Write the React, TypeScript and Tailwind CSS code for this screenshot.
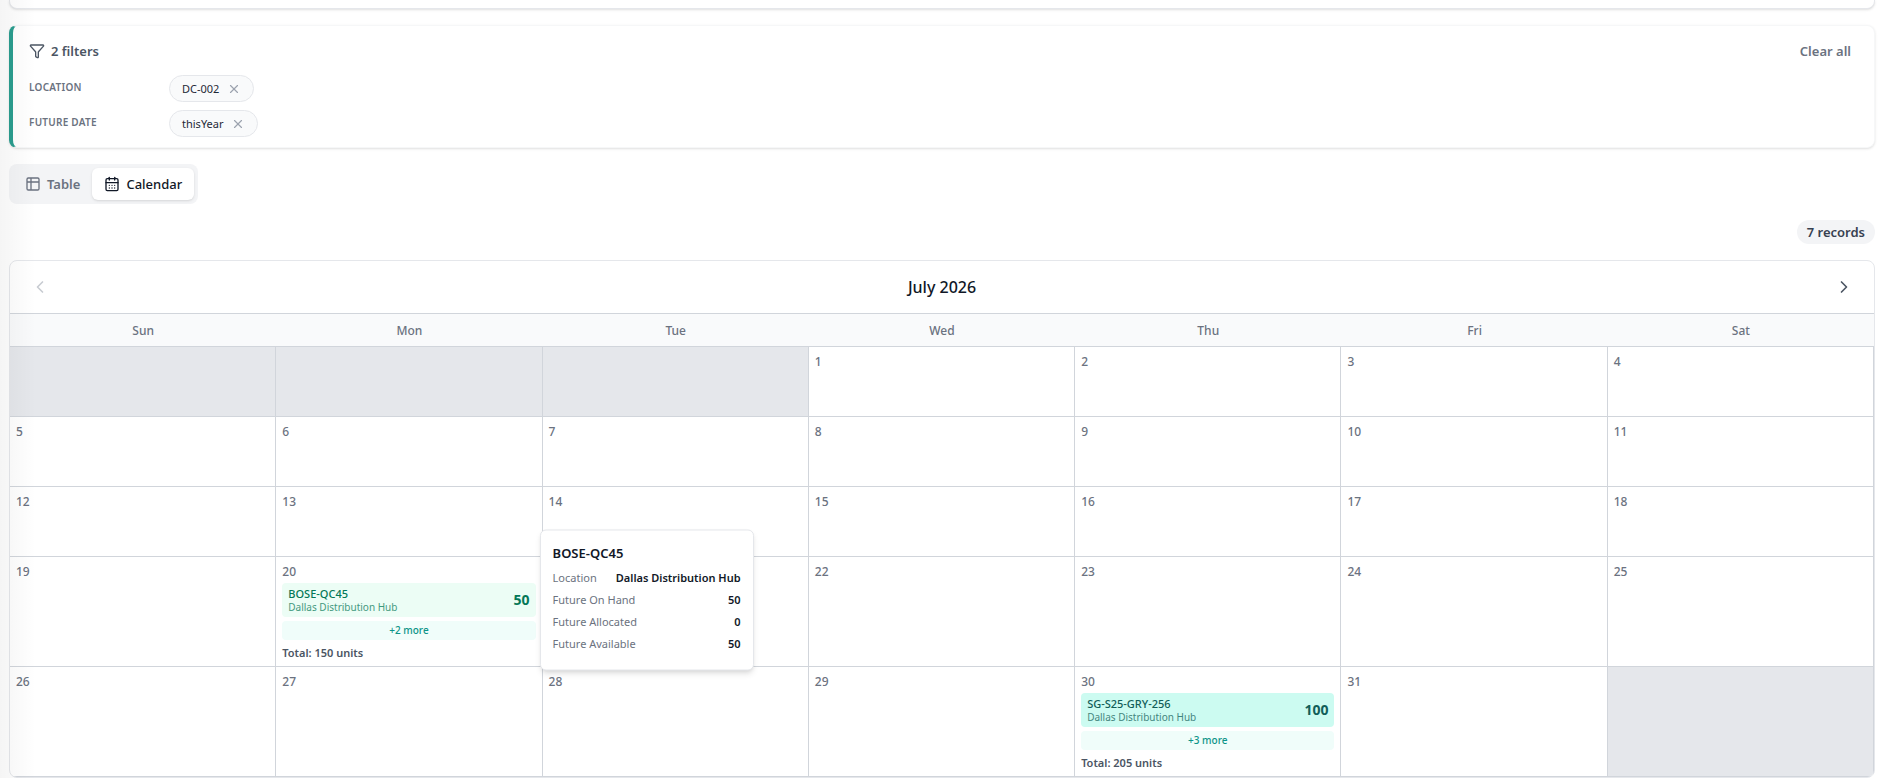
import { CalendarDays, ChevronLeft, ChevronRight, Filter, Table2, X } from 'lucide-react';

interface CalendarEntry {
  sku: string;
  location: string;
  quantity: number;
  tone: 'emerald' | 'teal';
}

interface DayData {
  entry: CalendarEntry;
  more: number;
  total: number;
}

const WEEKDAYS = ['Sun', 'Mon', 'Tue', 'Wed', 'Thu', 'Fri', 'Sat'];
const LEADING_BLANKS = 3;
const DAYS_IN_MONTH = 31;
const OPEN_DAY = 20;

const FILTERS = [
  { label: 'Location', value: 'DC-002' },
  { label: 'Future Date', value: 'thisYear' },
];

const DAYS: Record<number, DayData> = {
  20: {
    entry: { sku: 'BOSE-QC45', location: 'Dallas Distribution Hub', quantity: 50, tone: 'emerald' },
    more: 2,
    total: 150,
  },
  30: {
    entry: { sku: 'SG-S25-GRY-256', location: 'Dallas Distribution Hub', quantity: 100, tone: 'teal' },
    more: 3,
    total: 205,
  },
};

const TONES = {
  emerald: 'bg-[#ecfdf5] text-[#047857]',
  teal: 'bg-[#ccfbf1] text-[#115e59]',
};

function FilterPanel() {
  return (
    <section className="mt-4 rounded-lg border border-l-4 border-[#f6f7f8] border-l-[#2a9d8f] bg-white px-4 pt-[15px] pb-2.5 shadow-sm">
      <div className="flex items-center justify-between pr-[7px]">
        <h2 className="flex items-center gap-1.5 text-[13px] leading-5 font-semibold text-[#4b5563]">
          <Filter className="h-4 w-4 text-[#4b5563]" />
          2 filters
        </h2>
        <button type="button" className="text-[13px] leading-5 font-semibold text-[#6b7280]">Clear all</button>
      </div>
      <dl className="mt-3.5 flex flex-col gap-2">
        {FILTERS.map((filter) => (
          <div key={filter.label} className="flex items-start">
            <dt className="w-[140px] pt-1 text-[10px] leading-4 font-semibold tracking-wide text-[#6b7280] uppercase">
              {filter.label}
            </dt>
            <dd className="flex items-center gap-2 rounded-full border border-[#e5e7eb] bg-[#f9fafb] px-3 py-1 text-[11px] leading-[17px] text-[#1f2937]">
              {filter.value}
              <button type="button" aria-label={`Remove ${filter.label}`}>
                <X className="h-3.5 w-3.5 text-[#9ca3af]" />
              </button>
            </dd>
          </div>
        ))}
      </dl>
    </section>
  );
}

function ViewToggle() {
  return (
    <div className="mt-4 flex w-fit rounded-lg bg-[#f3f4f6] p-1">
      <button type="button" className="flex items-center gap-1.5 rounded-md px-3 py-1.5 text-[13px] leading-5 font-semibold text-[#6b7280]">
        <Table2 className="h-4 w-4" />
        Table
      </button>
      <button type="button" className="flex items-center gap-1.5 rounded-md bg-white px-3 py-1.5 text-[13px] leading-5 font-medium text-[#111827] shadow-sm">
        <CalendarDays className="h-4 w-4" />
        Calendar
      </button>
    </div>
  );
}

function DetailsCard({ entry }: { entry: CalendarEntry }) {
  const rows = [
    ['Location', entry.location],
    ['Future On Hand', entry.quantity],
    ['Future Allocated', 0],
    ['Future Available', entry.quantity],
  ];

  return (
    <div className="absolute top-1/2 left-full z-10 ml-1 w-[214px] -translate-y-1/2 rounded-md border border-[#e5e7eb] bg-white px-3 pt-3 pb-[15px] shadow-md">
      <p className="mb-1 text-[13px] leading-5 font-semibold text-[#111827]">{entry.sku}</p>
      <dl>
        {rows.map(([label, value]) => (
          <div key={label} className="flex justify-between py-[3px] text-[11px] leading-4 whitespace-nowrap">
            <dt className="text-[#6b7280]">{label}</dt>
            <dd className="font-semibold text-[#111827]">{value}</dd>
          </div>
        ))}
      </dl>
    </div>
  );
}

function DayCell({ day }: { day: number }) {
  const data = DAYS[day];
  // the open details card lies over the next day's number
  const covered = day === OPEN_DAY + 1;

  return (
    <td className="h-[70px] border-r border-b border-[#d1d5db] px-1.5 pt-1.5 pb-1 align-top">
      {!covered && <div className="text-[12px] leading-[18px] font-medium text-[#6b7280]">{day}</div>}
      {data && (
        <div className="mt-0.5 flex flex-col gap-1">
          <div className="relative">
            <button type="button" className={`flex w-full items-center justify-between rounded px-1.5 py-1 text-left ${TONES[data.entry.tone]}`}>
              <span className="flex flex-col">
                <span className="text-[11px] leading-[14px] font-medium">{data.entry.sku}</span>
                <span className="text-[10px] leading-3 opacity-75">{data.entry.location}</span>
              </span>
              <span className="text-[14px] leading-5 font-bold">{data.entry.quantity}</span>
            </button>
            {day === OPEN_DAY && <DetailsCard entry={data.entry} />}
          </div>
          <button type="button" className="rounded bg-[#f0fdfa] py-0.5 text-[10px] leading-[15px] font-medium text-[#0d9488]">
            +{data.more} more
          </button>
          <p className="text-[11px] leading-[18px] font-semibold text-[#4b5563]">Total: {data.total} units</p>
        </div>
      )}
    </td>
  );
}

function MonthCalendar() {
  const cells = Array.from({ length: 35 }, (_, i) => i - LEADING_BLANKS + 1);
  const weeks = Array.from({ length: 5 }, (_, i) => cells.slice(i * 7, i * 7 + 7));

  return (
    <section className="mt-4 overflow-hidden rounded-lg border border-[#e5e7eb] bg-white">
      <header className="flex items-center justify-between border-b border-[#d1d5db] px-4 py-3">
        <button type="button" aria-label="Previous month" disabled className="p-1 text-[#c8ccd2]">
          <ChevronLeft className="h-5 w-5" />
        </button>
        <h2 className="text-[16px] leading-6 font-medium text-[#111827]">July 2026</h2>
        <button type="button" aria-label="Next month" className="p-1 text-[#4b5563]">
          <ChevronRight className="h-5 w-5" />
        </button>
      </header>
      <table className="w-full table-fixed border-separate border-spacing-0">
        <thead>
          <tr className="bg-[#f9fafb]">
            {WEEKDAYS.map((name) => (
              <th key={name} scope="col" className="border-b border-[#d1d5db] pt-2 pb-1.5 text-[12px] leading-[18px] font-medium text-[#6b7280]">
                {name}
              </th>
            ))}
          </tr>
        </thead>
        <tbody>
          {weeks.map((week, index) => (
            <tr key={index}>
              {week.map((day) =>
                day >= 1 && day <= DAYS_IN_MONTH ? (
                  <DayCell key={day} day={day} />
                ) : (
                  <td key={day} className="h-[70px] border-r border-b border-[#d1d5db] bg-[#e5e7eb]"></td>
                )
              )}
            </tr>
          ))}
        </tbody>
      </table>
    </section>
  );
}

export default function App() {
  return (
    <div className="relative bg-white pr-[15px] pl-[9px] font-['Noto_Sans','Open_Sans',sans-serif]">
      <div className="h-[9px] rounded-b-lg border border-t-0 border-[#e5e7eb] bg-white shadow-sm"></div>
      <FilterPanel />
      <ViewToggle />
      <div className="mt-4 flex justify-end">
        <span className="rounded-full bg-[#f3f4f6] px-2.5 py-0.5 text-[13px] leading-5 font-semibold text-[#374151]">7 records</span>
      </div>
      <MonthCalendar />
      <div className="pointer-events-none absolute inset-y-0 left-0 w-9 bg-linear-to-r from-black/4 to-transparent"></div>
    </div>
  );
}
